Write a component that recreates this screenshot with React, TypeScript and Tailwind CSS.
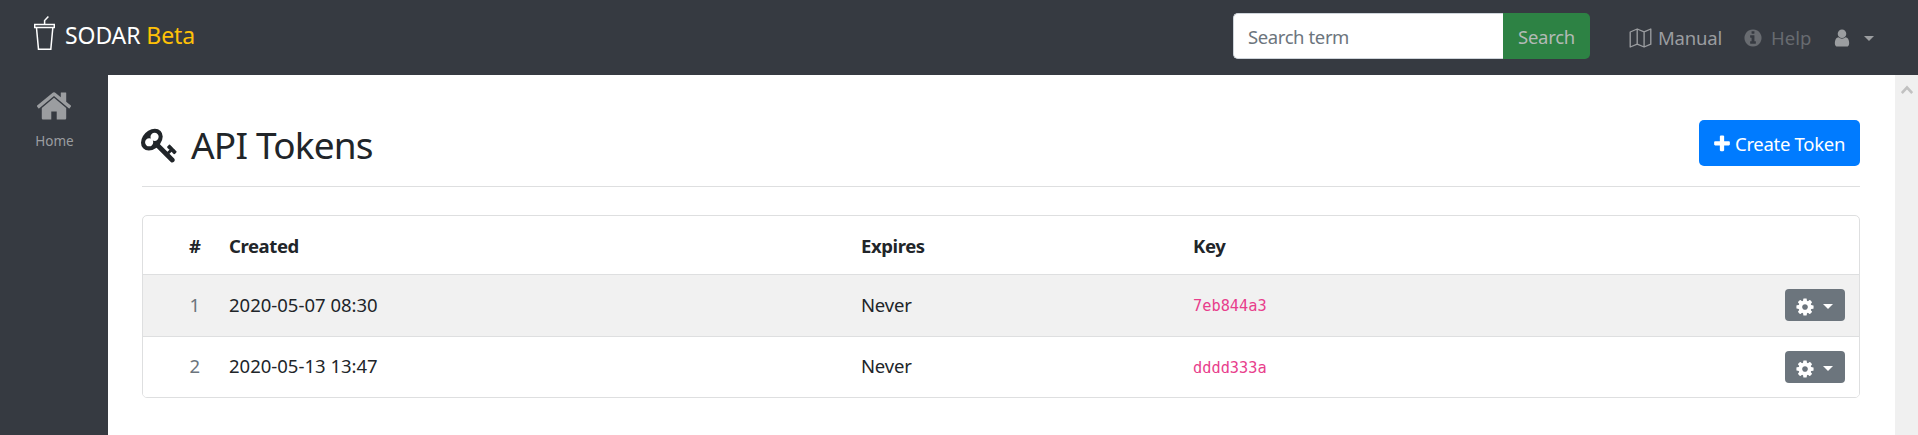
import type { ReactNode } from "react";

type IconProps = { className: string; viewBox?: string; children: ReactNode };

function Icon({ className, viewBox = "0 0 1792 1792", children }: IconProps) {
  return (
    <svg className={"shrink-0 " + className} viewBox={viewBox} fill="currentColor" aria-hidden="true">
      {children}
    </svg>
  );
}

const HomeIcon = ({ className }: { className: string }) => (
  <Icon className={className}>
    <path d="M1472 992v480q0 26-19 45t-45 19h-384v-384h-256v384h-384q-26 0-45-19t-19-45v-480q0-1 .5-3t.5-3l575-474 575 474q1 2 1 6zm223-69l-62 74q-8 9-21 11h-3q-13 0-21-7l-692-577-692 577q-12 8-24 7-13-2-21-11l-62-74q-8-10-7-23.5t11-21.5l719-599q32-26 76-26t76 26l244 204v-195q0-14 9-23t23-9h192q14 0 23 9t9 23v408l219 182q10 8 11 21.5t-7 23.5z" />
  </Icon>
);

const KeyIcon = ({ className }: { className: string }) => (
  <Icon className={className}>
    <path d="M832 512q0-80-56-136t-136-56-136 56-56 136q0 42 19 83-41-19-83-19-80 0-136 56t-56 136 56 136 136 56 136-56 56-136q0-42-19-83 41 19 83 19 80 0 136-56t56-136zm851 704q0 17-49 66t-66 49q-9 0-28.5-16t-36.5-33-38.5-40-24.5-26l-96 96 220 220q28 28 28 68 0 42-39 81t-81 39q-40 0-68-28l-671-671q-176 131-365 131-163 0-265.5-102.5t-102.5-265.5q0-160 95-313t248-248 313-95q163 0 265.5 102.5t102.5 265.5q0 189-131 365l355 355 96-96q-3-3-26-24.5t-40-38.5-33-36.5-16-28.5q0-17 49-66t66-49q13 0 23 10 6 6 46 44.5t82 79.5 86.5 86 73 78 28.5 41z" />
  </Icon>
);

const CogIcon = ({ className }: { className: string }) => (
  <Icon className={className}>
    <path d="M1152 896q0-106-75-181t-181-75-181 75-75 181 75 181 181 75 181-75 75-181zm512-109v222q0 12-8 23t-20 13l-185 28q-19 54-39 91 35 50 107 138 10 12 10 25t-9 23q-27 37-99 108t-94 71q-12 0-26-9l-138-108q-44 23-91 38-16 136-29 186-7 28-36 28h-222q-14 0-24.5-8.5t-11.5-21.5l-28-184q-49-16-90-37l-141 107q-10 9-25 9-14 0-25-11-126-114-165-168-7-10-7-23 0-12 8-23 15-21 51-66.5t54-70.5q-27-50-41-99l-183-27q-13-2-21-12.5t-8-23.5v-222q0-12 8-23t19-13l186-28q14-46 39-92-40-57-107-138-10-12-10-24 0-10 9-23 26-36 98.5-107.5t94.5-71.5q13 0 26 10l138 107q44-23 91-38 16-136 29-186 7-28 36-28h222q14 0 24.5 8.5t11.5 21.5l28 184q49 16 90 37l142-107q9-9 24-9 13 0 25 10 129 119 165 170 7 8 7 22 0 12-8 23-15 21-51 66.5t-54 70.5q26 50 41 98l183 28q13 2 21 12.5t8 23.5z" />
  </Icon>
);

const InfoIcon = ({ className }: { className: string }) => (
  <Icon className={className}>
    <path d="M1152 1376v-160q0-14-9-23t-23-9h-96v-512q0-14-9-23t-23-9h-320q-14 0-23 9t-9 23v160q0 14 9 23t23 9h96v320h-96q-14 0-23 9t-9 23v160q0 14 9 23t23 9h448q14 0 23-9t9-23zm-128-896v-160q0-14-9-23t-23-9h-192q-14 0-23 9t-9 23v160q0 14 9 23t23 9h192q14 0 23-9t9-23zm640 416q0 209-103 385.5t-279.5 279.5-385.5 103-385.5-103-279.5-279.5-103-385.5 103-385.5 279.5-279.5 385.5-103 385.5 103 279.5 279.5 103 385.5z" />
  </Icon>
);

const UserIcon = ({ className }: { className: string }) => (
  <Icon className={className}>
    <path d="M1536 1399q0 109-62.5 187t-150.5 78h-854q-88 0-150.5-78t-62.5-187q0-85 8.5-160.5t31.5-152 58.5-131 94-89 134.5-34.5q131 128 313 128t313-128q76 0 134.5 34.5t94 89 58.5 131 31.5 152 8.5 160.5zm-256-887q0 159-112.5 271.5t-271.5 112.5-271.5-112.5-112.5-271.5 112.5-271.5 271.5-112.5 271.5 112.5 112.5 271.5z" />
  </Icon>
);

const PlusIcon = ({ className }: { className: string }) => (
  <Icon className={className}>
    <path d="M1600 736v192q0 40-28 68t-68 28h-416v416q0 40-28 68t-68 28h-192q-40 0-68-28t-28-68v-416h-416q-40 0-68-28t-28-68v-192q0-40 28-68t68-28h416v-416q0-40 28-68t68-28h192q40 0 68 28t28 68v416h416q40 0 68 28t28 68z" />
  </Icon>
);

const MapIcon = ({ className }: { className: string }) => (
  <Icon className={className} viewBox="0 0 22 20">
    <path
      d="M.7 4 7.7 1l6.9 2.9L21.3 1v15.2l-6.7 2.8-6.9-2.9L.7 19zM7.7 1v15.1M14.6 3.9V19"
      fill="none"
      stroke="currentColor"
      strokeWidth="1.35"
      strokeLinejoin="round"
    />
  </Icon>
);

const CupIcon = ({ className }: { className: string }) => (
  <Icon className={className} viewBox="0 0 21 34">
    <path
      d="M10.6 8V4.6L14.4.6M.7 8.6h19.6v3H.7zM2.5 12l2 21.3h12.3l2-21.3"
      fill="none"
      stroke="currentColor"
      strokeWidth="1.5"
    />
  </Icon>
);

const Caret = ({ className }: { className: string }) => (
  <Icon className={className} viewBox="0 0 10 5">
    <path d="M0 0h10L5 5z" />
  </Icon>
);

const tokens = [
  { id: 1, created: "2020-05-07 08:30", expires: "Never", key: "7eb844a3" },
  { id: 2, created: "2020-05-13 13:47", expires: "Never", key: "dddd333a" },
];

function Header() {
  return (
    <header className="flex h-[75px] shrink-0 items-start bg-[#363a41] text-[#9b9da0]">
      <a className="ml-[34px] mt-4 flex items-start text-white">
        <CupIcon className="h-[34px] w-[21px]" />
        <span className="ml-[10px] text-[23px] leading-[38px] tracking-[-0.1px]">
          SODAR <span className="text-[#ffc107]">Beta</span>
        </span>
      </a>
      <div className="ml-auto mt-[13px] flex h-[46px] w-[357px] text-[18.5px] leading-[46px]">
        <div className="w-[270px] rounded-l-[5px] border border-r-0 border-[#ced4da] bg-white pl-[14px] leading-[45px] tracking-[-0.4px] text-[#6c757d]">
          Search term
        </div>
        <button className="w-[87px] rounded-r-[5px] bg-[#2d8244] pt-px tracking-[-0.3px] text-[#b3bab6]">Search</button>
      </div>
      <nav className="ml-[39px] mr-[44px] mt-[15px] flex h-[46px] items-center text-[18.5px] leading-[46px]">
        <MapIcon className="h-5 w-[23px]" />
        <span className="ml-[6px] w-[63px] tracking-[-0.2px]">Manual</span>
        <InfoIcon className="ml-[22px] h-[20px] w-[20px] text-[#686b70]" />
        <span className="ml-[8px] w-[42px] text-[#686b70]">Help</span>
        <UserIcon className="ml-[19px] h-[20px] w-[20px]" />
        <Caret className="ml-[12px] h-[5px] w-[10px]" />
      </nav>
    </header>
  );
}

function Sidebar() {
  return (
    <aside className="flex w-[108px] flex-col items-center bg-[#363a41] text-[#9b9da0]">
      <HomeIcon className="mt-3 h-[38px] w-[38px]" />
      <span className="mt-[6px] pl-px text-[13.5px] leading-5">Home</span>
    </aside>
  );
}

const columns = "grid grid-cols-[86px_632px_332px_1fr_74px]";

function TokenTable() {
  return (
    <section className="mt-7 h-[183px] overflow-hidden rounded-[5px] border border-[#dedfe0] text-[18.5px]">
      <div className={columns + " h-[58px] leading-[59px] font-bold tracking-[-0.4px]"}>
        <span className="pl-[46px]">#</span>
        <span>Created</span>
        <span>Expires</span>
        <span>Key</span>
      </div>
      {tokens.map((token) => (
        <div
          key={token.id}
          className={columns + " h-[62px] border-t border-[#dedfe0] leading-[59px] odd:bg-white odd:leading-[57px] even:bg-[#f1f1f1]"}
        >
          <span className="pr-[29px] text-right text-[#6c757d]">{token.id}</span>
          <span>{token.created}</span>
          <span className="tracking-[-0.2px]">{token.expires}</span>
          <code className="pt-px font-['DejaVu_Sans_Mono',monospace] text-[15.3px] leading-[61px] text-[#e83e8c]">
            {token.key}
          </code>
          <button className="mt-[14px] flex h-8 w-[60px] items-center rounded-[4px] bg-[#6c757d] pl-[10px] text-white">
            <CogIcon className="mt-1 h-5 w-5" />
            <Caret className="ml-[8px] mt-0.5 h-[5px] w-[10px]" />
          </button>
        </div>
      ))}
    </section>
  );
}

export default function App() {
  return (
    <div className="flex h-[435px] w-[1918px] flex-col overflow-hidden bg-white font-['Noto_Sans','Open_Sans',sans-serif] text-[#212529]">
      <Header />
      <div className="flex min-h-0 flex-1">
        <Sidebar />
        <main className="min-w-0 flex-1 pl-[34px] pr-[35px]">
          <div className="flex h-[112px] items-start justify-between border-b border-[#dedfe0]">
            <h2 className="mt-11 flex items-start text-[37px] leading-[52px] tracking-[-0.8px]">
              <KeyIcon className="-ml-px mr-[12px] mt-[7px] h-[38px] w-[38px]" />
              API Tokens
            </h2>
            <button className="mt-[45px] flex h-[46px] w-[161px] items-center rounded-[5px] bg-[#007bff] pl-[13px] text-[18.5px] leading-[46px] text-white">
              <PlusIcon className="mt-0.5 h-5 w-5" />
              <span className="ml-[3px] whitespace-nowrap pt-px tracking-[-0.3px]">Create Token</span>
            </button>
          </div>
          <TokenTable />
        </main>
        <div className="flex w-[23px] justify-center bg-[#f0f0f0]">
          <svg className="mt-[10px] h-[10px] w-3 text-[#c1c1c1]" viewBox="0 0 12 10" fill="none" stroke="currentColor" strokeWidth="2.6">
            <path d="M.8 8 6 2.5 11.2 8" />
          </svg>
        </div>
      </div>
    </div>
  );
}
